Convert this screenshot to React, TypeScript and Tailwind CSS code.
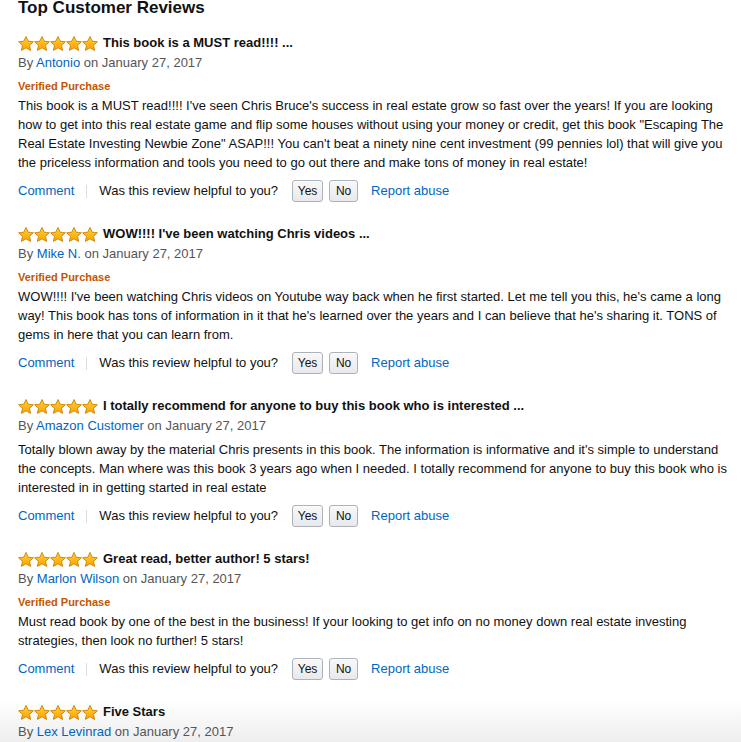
type Review = {
  title: string;
  author: string;
  date: string;
  verified: boolean;
  body?: string;
};

const reviews: Review[] = [
  {
    title: 'This book is a MUST read!!!! ...',
    author: 'Antonio',
    date: 'January 27, 2017',
    verified: true,
    body: 'This book is a MUST read!!!! I\'ve seen Chris Bruce\'s success in real estate grow so fast over the years! If you are looking how to get into this real estate game and flip some houses without using your money or credit, get this book "Escaping The Real Estate Investing Newbie Zone" ASAP!!! You can\'t beat a ninety nine cent investment (99 pennies lol) that will give you the priceless information and tools you need to go out there and make tons of money in real estate!'
  },
  {
    title: "WOW!!!! I've been watching Chris videos ...",
    author: 'Mike N.',
    date: 'January 27, 2017',
    verified: true,
    body: "WOW!!!! I've been watching Chris videos on Youtube way back when he first started. Let me tell you this, he's came a long way! This book has tons of information in it that he's learned over the years and I can believe that he's sharing it. TONS of gems in here that you can learn from."
  },
  {
    title: 'I totally recommend for anyone to buy this book who is interested ...',
    author: 'Amazon Customer',
    date: 'January 27, 2017',
    verified: false,
    body: "Totally blown away by the material Chris presents in this book. The information is informative and it's simple to understand the concepts. Man where was this book 3 years ago when I needed. I totally recommend for anyone to buy this book who is interested in in getting started in real estate"
  },
  {
    title: 'Great read, better author! 5 stars!',
    author: 'Marlon Wilson',
    date: 'January 27, 2017',
    verified: true,
    body: 'Must read book by one of the best in the business! If your looking to get info on no money down real estate investing strategies, then look no further! 5 stars!'
  },
  {
    title: 'Five Stars',
    author: 'Lex Levinrad',
    date: 'January 27, 2017',
    verified: true
  }
];

function Star({ id }: { id: string }) {
  return (
    <svg width="16" height="15" viewBox="0 0 16 15" className="block">
      <defs>
        <linearGradient id={id} x1="0" y1="0" x2="0" y2="1">
          <stop offset="0" stopColor="#ffd23a" />
          <stop offset="1" stopColor="#ffa000" />
        </linearGradient>
      </defs>
      <path
        d="M8 0.5 L10.2 5.2 L15.4 5.8 L11.5 9.3 L12.6 14.4 L8 11.8 L3.4 14.4 L4.5 9.3 L0.6 5.8 L5.8 5.2 Z"
        fill={`url(#${id})`}
        stroke="#c98200"
        strokeWidth="0.9"
        strokeLinejoin="round"
      />
    </svg>
  );
}

function Stars({ k }: { k: number }) {
  return (
    <div className="flex">
      {[0, 1, 2, 3, 4].map((i) => (
        <Star key={i} id={`star-${k}-${i}`} />
      ))}
    </div>
  );
}

function ReviewItem({ review, index }: { review: Review; index: number }) {
  return (
    <div className="mb-[22px]">
      <div className="flex h-[20px] items-center">
        <Stars k={index} />
        <h3 className="ml-[5px] text-[13px] font-bold text-[#111]">{review.title}</h3>
      </div>
      <div className="text-[13px] leading-[20px] text-[#555]">
        By <a className="text-[#0066c0]">{review.author}</a> on {review.date}
      </div>
      {review.verified && (
        <div className="mt-[4px] text-[11px] font-bold leading-[19px] text-[#c45500]">Verified Purchase</div>
      )}
      {review.body && (
        <p className={`${review.verified ? '' : 'mt-[4px]'} text-[13px] leading-[19px] text-[#111]`}>{review.body}</p>
      )}
      <div className="mt-[8px] flex h-[22px] items-center text-[13px]">
        <a className="pr-[12px] text-[#0066c0]">Comment</a>
        <span className="h-[13px] border-l border-[#ddd]" />
        <span className="ml-[12px] text-[#111]">Was this review helpful to you?</span>
        <button className="ml-[14px] h-[22px] w-[31px] rounded-[3px] border border-[#adb1b8] bg-gradient-to-b from-[#f7f8fa] to-[#e7e9ec] text-[12px] text-[#111] shadow-[inset_0_1px_0_rgba(255,255,255,0.6)]">
          Yes
        </button>
        <button className="ml-[6px] h-[22px] w-[29px] rounded-[3px] border border-[#adb1b8] bg-gradient-to-b from-[#f7f8fa] to-[#e7e9ec] text-[12px] text-[#111] shadow-[inset_0_1px_0_rgba(255,255,255,0.6)]">
          No
        </button>
        <a className="ml-[13px] text-[#0066c0]">Report abuse</a>
      </div>
    </div>
  );
}

export default function App() {
  return (
    <div className="h-[742px] overflow-hidden bg-[linear-gradient(to_bottom,#ffffff_700px,#eeeeee_742px)] font-['Liberation_Sans',Arial,sans-serif]">
      <div className="pl-[18px] pr-[6px]">
        <h2 className="-mt-[2px] text-[17px] font-bold leading-[20px] text-[#111]">Top Customer Reviews</h2>
        <div className="mt-[15px]">
          {reviews.map((r, i) => (
            <ReviewItem key={r.author} review={r} index={i} />
          ))}
        </div>
      </div>
    </div>
  );
}
